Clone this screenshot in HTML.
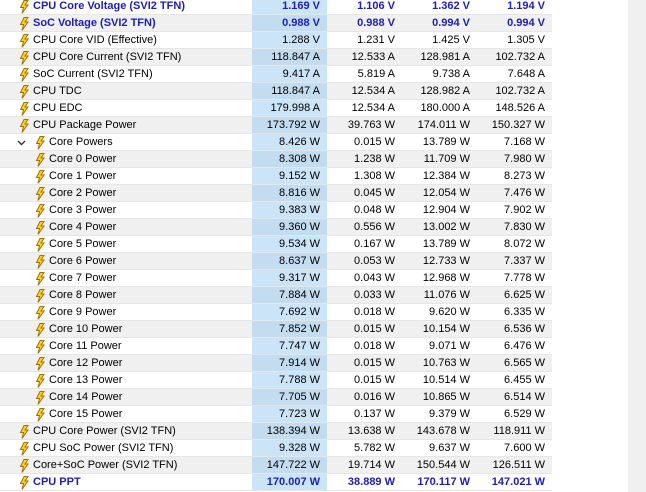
<!DOCTYPE html><html><head><style>
body{margin:0;width:646px;height:492px;overflow:hidden;background:#fff;font-family:"Liberation Sans",sans-serif;font-size:11px;color:#000;position:relative}
.sb{position:absolute;left:628px;top:0;width:18px;height:492px;background:#f0f0f0}
.r{position:absolute;left:0;width:552px;height:16px;border-bottom:1px solid #e6e6e6;line-height:17px}
.g{background:#f0f0f0}
.n{position:absolute;top:0;white-space:nowrap}
.v{position:absolute;top:0;text-align:right}
.c1{left:252px;width:68px;padding-right:7px;background:#cce4f7;height:16px}
.g .c1{background:#c4dcf0}
.c2{left:327px;width:68px}
.c3{left:402px;width:68px}
.c4{left:477px;width:68px}
.b{font-weight:bold;color:#1e1eb4}
svg{position:absolute;top:2px}
</style></head><body>
<div class="sb"></div>
<div id="t"></div>
<script>
var rows=[
["CPU Core Voltage (SVI2 TFN)","1.169 V","1.106 V","1.362 V","1.194 V",0,1],
["SoC Voltage (SVI2 TFN)","0.988 V","0.988 V","0.994 V","0.994 V",0,1],
["CPU Core VID (Effective)","1.288 V","1.231 V","1.425 V","1.305 V",0,0],
["CPU Core Current (SVI2 TFN)","118.847 A","12.533 A","128.981 A","102.732 A",0,0],
["SoC Current (SVI2 TFN)","9.417 A","5.819 A","9.738 A","7.648 A",0,0],
["CPU TDC","118.847 A","12.534 A","128.982 A","102.732 A",0,0],
["CPU EDC","179.998 A","12.534 A","180.000 A","148.526 A",0,0],
["CPU Package Power","173.792 W","39.763 W","174.011 W","150.327 W",0,0],
["Core Powers","8.426 W","0.015 W","13.789 W","7.168 W",2,0],
["Core 0 Power","8.308 W","1.238 W","11.709 W","7.980 W",1,0],
["Core 1 Power","9.152 W","1.308 W","12.384 W","8.273 W",1,0],
["Core 2 Power","8.816 W","0.045 W","12.054 W","7.476 W",1,0],
["Core 3 Power","9.383 W","0.048 W","12.904 W","7.902 W",1,0],
["Core 4 Power","9.360 W","0.556 W","13.002 W","7.830 W",1,0],
["Core 5 Power","9.534 W","0.167 W","13.789 W","8.072 W",1,0],
["Core 6 Power","8.637 W","0.053 W","12.733 W","7.337 W",1,0],
["Core 7 Power","9.317 W","0.043 W","12.968 W","7.778 W",1,0],
["Core 8 Power","7.884 W","0.033 W","11.076 W","6.625 W",1,0],
["Core 9 Power","7.692 W","0.018 W","9.620 W","6.335 W",1,0],
["Core 10 Power","7.852 W","0.015 W","10.154 W","6.536 W",1,0],
["Core 11 Power","7.747 W","0.018 W","9.071 W","6.476 W",1,0],
["Core 12 Power","7.914 W","0.015 W","10.763 W","6.565 W",1,0],
["Core 13 Power","7.788 W","0.015 W","10.514 W","6.455 W",1,0],
["Core 14 Power","7.705 W","0.016 W","10.865 W","6.514 W",1,0],
["Core 15 Power","7.723 W","0.137 W","9.379 W","6.529 W",1,0],
["CPU Core Power (SVI2 TFN)","138.394 W","13.638 W","143.678 W","118.911 W",0,0],
["CPU SoC Power (SVI2 TFN)","9.328 W","5.782 W","9.637 W","7.600 W",0,0],
["Core+SoC Power (SVI2 TFN)","147.722 W","19.714 W","150.544 W","126.511 W",0,0],
["CPU PPT","170.007 W","38.889 W","170.117 W","147.021 W",0,1]];
var bolt='<polygon points="5,0.5 9,0.5 6,5 9,5 3,13.5 4.5,7.5 1.5,7.5" fill="#ffd21e" stroke="#a0700a" stroke-width="1"/>';
var h='';
rows.forEach(function(r,i){
 var ind=r[5]?16:0, bx=19+ind, tx=33+ind;
 var cls='r'+(i%2?' g':'')+(r[6]?' b':'');
 h+='<div class="'+cls+'" style="top:'+(17*i-2)+'px">';
 if(r[5]==2)h+='<svg width="10" height="10" style="left:17px;top:4px"><polyline points="1,3 4.5,6.5 8,3" fill="none" stroke="#333" stroke-width="1.4"/></svg>';
 h+='<svg width="11" height="15" style="left:'+bx+'px">'+bolt+'</svg>';
 h+='<span class="n" style="left:'+tx+'px">'+r[0]+'</span>';
 h+='<span class="v c1">'+r[1]+'</span><span class="v c2">'+r[2]+'</span><span class="v c3">'+r[3]+'</span><span class="v c4">'+r[4]+'</span></div>';
});
document.getElementById('t').innerHTML=h;
</script>
</body></html>
